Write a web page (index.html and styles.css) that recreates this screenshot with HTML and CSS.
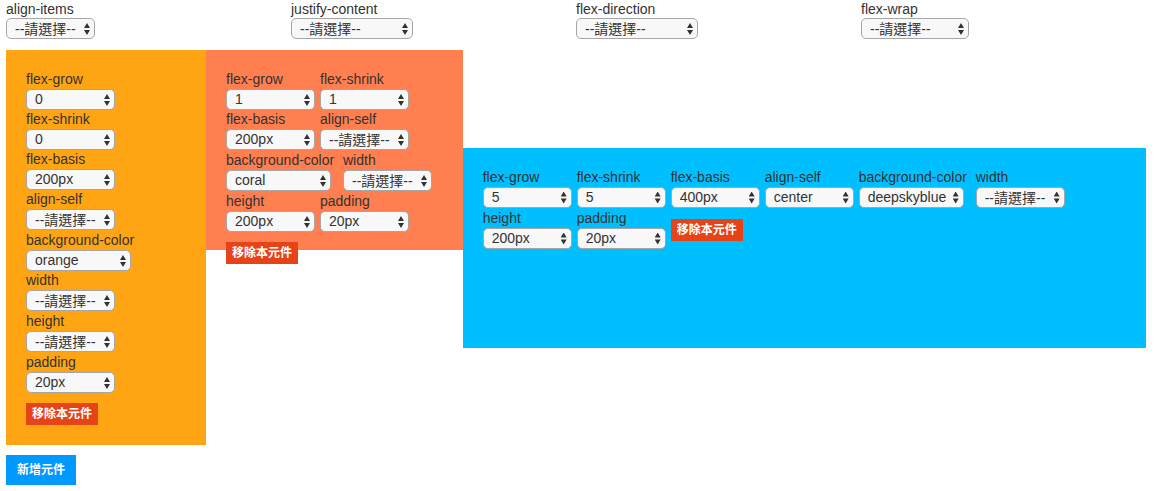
FILE: index.html
```html
<!DOCTYPE html>
<html lang="zh-Hant">
<head>
<meta charset="utf-8">
<meta name="viewport" content="width=device-width, initial-scale=1">
<title>Flexbox</title>
<link rel="stylesheet" href="styles.css">
</head>
<body>
<header class="toolbar">
  <div class="field"><label for="align-items">align-items</label><span class="picker"><select id="align-items" class="empty"><option>--請選擇--</option></select></span></div>
  <div class="field"><label for="justify-content">justify-content</label><span class="picker picker-xl"><select id="justify-content" class="empty"><option>--請選擇--</option></select></span></div>
  <div class="field"><label for="flex-direction">flex-direction</label><span class="picker picker-xl"><select id="flex-direction" class="empty"><option>--請選擇--</option></select></span></div>
  <div class="field"><label for="flex-wrap">flex-wrap</label><span class="picker picker-lg"><select id="flex-wrap" class="empty"><option>--請選擇--</option></select></span></div>
</header>
<main class="stage">
  <section class="item item-orange">
    <div class="field"><label for="a-grow">flex-grow</label><span class="picker"><select id="a-grow"><option>0</option></select></span></div>
    <div class="field"><label for="a-shrink">flex-shrink</label><span class="picker"><select id="a-shrink"><option>0</option></select></span></div>
    <div class="field"><label for="a-basis">flex-basis</label><span class="picker"><select id="a-basis"><option>200px</option></select></span></div>
    <div class="field field-empty"><label for="a-self">align-self</label><span class="picker"><select id="a-self" class="empty"><option>--請選擇--</option></select></span></div>
    <div class="field field-color"><label for="a-color">background-color</label><span class="picker picker-md"><select id="a-color"><option>orange</option></select></span></div>
    <div class="field field-empty"><label for="a-width">width</label><span class="picker"><select id="a-width" class="empty"><option>--請選擇--</option></select></span></div>
    <div class="field field-empty"><label for="a-height">height</label><span class="picker"><select id="a-height" class="empty"><option>--請選擇--</option></select></span></div>
    <div class="field"><label for="a-padding">padding</label><span class="picker"><select id="a-padding"><option>20px</option></select></span></div>
    <button type="button" class="remove">移除本元件</button>
  </section>
  <section class="item item-coral">
    <div class="field"><label for="b-grow">flex-grow</label><span class="picker"><select id="b-grow"><option>1</option></select></span></div>
    <div class="field"><label for="b-shrink">flex-shrink</label><span class="picker"><select id="b-shrink"><option>1</option></select></span></div>
    <div class="field"><label for="b-basis">flex-basis</label><span class="picker"><select id="b-basis"><option>200px</option></select></span></div>
    <div class="field field-empty"><label for="b-self">align-self</label><span class="picker"><select id="b-self" class="empty"><option>--請選擇--</option></select></span></div>
    <div class="field field-color"><label for="b-color">background-color</label><span class="picker picker-md"><select id="b-color"><option>coral</option></select></span></div>
    <div class="field field-empty"><label for="b-width">width</label><span class="picker"><select id="b-width" class="empty"><option>--請選擇--</option></select></span></div>
    <div class="field"><label for="b-height">height</label><span class="picker"><select id="b-height"><option>200px</option></select></span></div>
    <div class="field"><label for="b-padding">padding</label><span class="picker"><select id="b-padding"><option>20px</option></select></span></div>
    <button type="button" class="remove">移除本元件</button>
  </section>
  <section class="item item-blue">
    <div class="field"><label for="c-grow">flex-grow</label><span class="picker"><select id="c-grow"><option>5</option></select></span></div>
    <div class="field"><label for="c-shrink">flex-shrink</label><span class="picker"><select id="c-shrink"><option>5</option></select></span></div>
    <div class="field"><label for="c-basis">flex-basis</label><span class="picker"><select id="c-basis"><option>400px</option></select></span></div>
    <div class="field"><label for="c-self">align-self</label><span class="picker"><select id="c-self"><option>center</option></select></span></div>
    <div class="field field-color"><label for="c-color">background-color</label><span class="picker picker-md"><select id="c-color"><option>deepskyblue</option></select></span></div>
    <div class="field field-empty"><label for="c-width">width</label><span class="picker"><select id="c-width" class="empty"><option>--請選擇--</option></select></span></div>
    <div class="field"><label for="c-height">height</label><span class="picker"><select id="c-height"><option>200px</option></select></span></div>
    <div class="field"><label for="c-padding">padding</label><span class="picker"><select id="c-padding"><option>20px</option></select></span></div>
    <button type="button" class="remove">移除本元件</button>
  </section>
</main>
<button type="button" class="add">新增元件</button>
</body>
</html>
```

FILE: styles.css
```css
*,
*::before,
*::after {
  box-sizing: border-box;
}

body {
  margin: 0;
  padding: 0 10px 0 6px;
  background: #fff;
  color: #333;
  font: 14px/19px "Liberation Sans", "Noto Sans CJK TC", sans-serif;
}

button,
select {
  font-family: inherit;
}

.toolbar {
  display: grid;
  grid-template-columns: repeat(4, 1fr);
  padding-bottom: 11px;
}

.toolbar label {
  line-height: 18px;
}

.stage {
  display: flex;
  align-items: flex-start;
}

.item {
  display: flex;
  flex-wrap: wrap;
  align-items: flex-start;
  align-content: flex-start;
  column-gap: 5px;
  padding: 20px;
}

.item-orange {
  flex: 0 0 200px;
  background: #ffa514;
}

.item-coral {
  flex: 1 1 200px;
  height: 200px;
  background: #ff7f50;
}

.item-blue {
  flex: 5 5 400px;
  align-self: center;
  height: 200px;
  background: #00bfff;
}

.field {
  display: flex;
  flex-direction: column;
  align-items: flex-start;
}

.field-empty {
  padding-bottom: 1px;
}

.field-color {
  min-width: 112px;
}

.picker {
  position: relative;
  display: block;
  width: 89px;
}

.picker-md {
  width: 105px;
}

.picker-lg {
  width: 108px;
}

.picker-xl {
  width: 122px;
}

/* Up and down arrows over the right end of the select */
.picker::after {
  content: "";
  position: absolute;
  top: 5px;
  right: 5px;
  width: 6px;
  height: 12px;
  background: #333;
  clip-path: polygon(50% 0, 100% 42%, 0 42%, 50% 0, 50% 100%, 0 58%, 100% 58%, 50% 100%);
  pointer-events: none;
}

.picker select {
  display: block;
  appearance: none;
  width: 100%;
  height: 21px;
  margin: 0;
  padding: 0 12px 0 8px;
  border: 1px solid #a6a6a6;
  border-radius: 5px;
  background: #f8f8f8;
  color: #333;
  font-size: 14px;
  line-height: 19px;
}

.picker .empty {
  padding-top: 1px;
}

.remove {
  height: 22px;
  margin: 10px 0 0;
  padding: 0 6px;
  border: 0;
  background: #e64418;
  color: #fff;
  font-size: 12px;
  font-weight: bold;
  line-height: 22px;
}

.add {
  height: 30px;
  margin: 10px 0 0;
  padding: 0 11px;
  border: 0;
  background: #0099ff;
  color: #fff;
  font-size: 12px;
  font-weight: bold;
  line-height: 30px;
}
```
